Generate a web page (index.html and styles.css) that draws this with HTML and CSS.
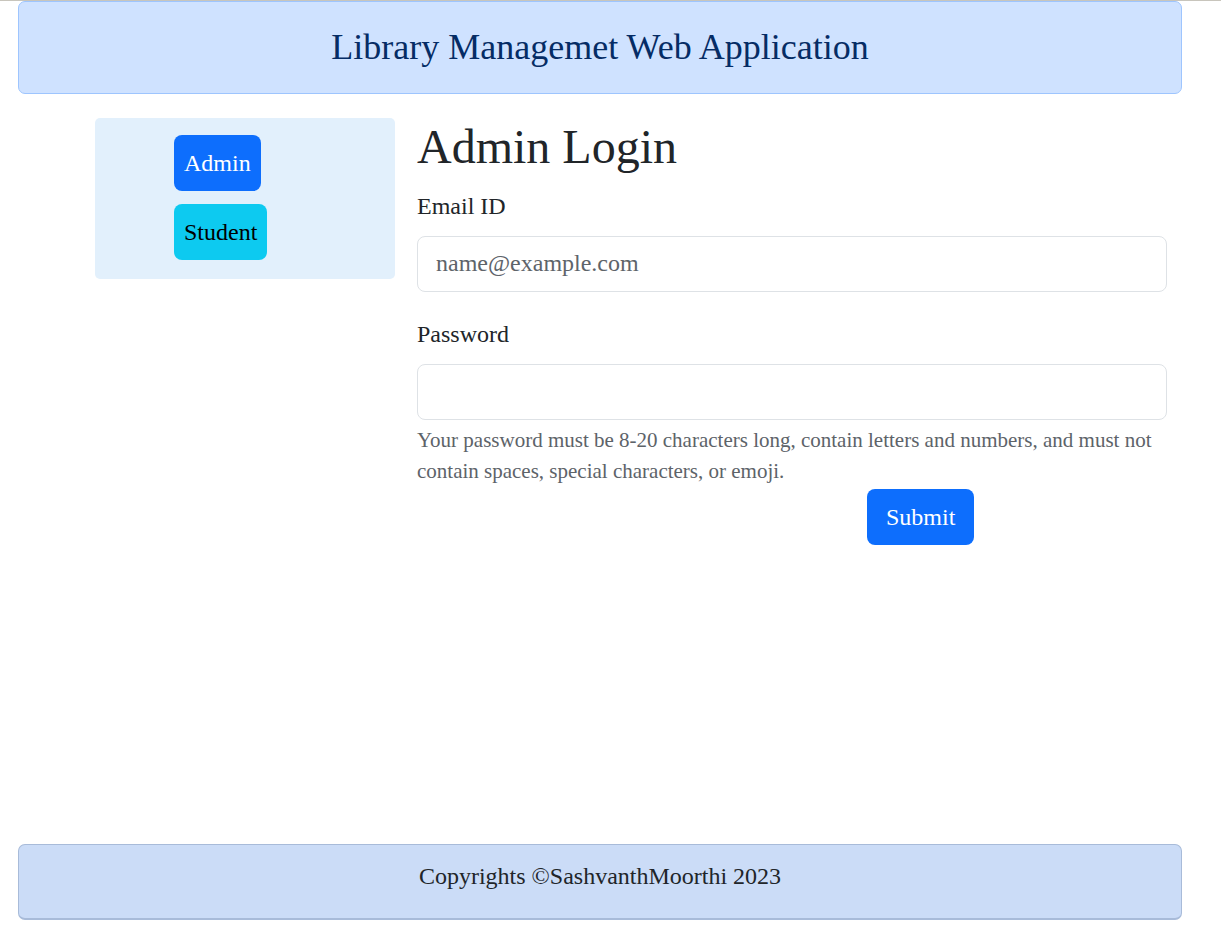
FILE: index.html
```html
<!DOCTYPE html>
<html lang="en">
<head>
<meta charset="utf-8">
<title>Library Management</title>
<link rel="stylesheet" href="styles.css">
</head>
<body>
<div class="page">
  <header class="site-header">
    <h2 class="site-title">Library Managemet Web Application</h2>
  </header>
  <div class="content">
    <aside class="sidebar">
      <button class="btn btn-primary">Admin</button>
      <button class="btn btn-info">Student</button>
    </aside>
    <main class="login">
      <h1 class="login-title">Admin Login</h1>
      <label class="form-label" for="email">Email ID</label>
      <input class="form-control" id="email" type="email" placeholder="name@example.com">
      <label class="form-label form-label-gap" for="pwd">Password</label>
      <input class="form-control" id="pwd" type="password">
      <p class="form-text">Your password must be 8-20 characters long, contain letters and numbers, and must not contain spaces, special characters, or emoji.</p>
      <div class="submit-row">
        <button class="btn btn-primary btn-submit" type="submit">Submit</button>
      </div>
    </main>
  </div>
  <footer class="site-footer">
    <p class="copyright">Copyrights ©SashvanthMoorthi 2023</p>
  </footer>
</div>
</body>
</html>
```
FILE: styles.css
```css
* { box-sizing: border-box; }
html, body { margin: 0; padding: 0; }
body {
  font-family: "Liberation Serif", "Times New Roman", serif;
  color: #212529;
  background: #fff;
  border-top: 1px solid #c8c5bc;
}
.page {
  display: flex;
  flex-direction: column;
  min-height: 941px;
  padding: 0 39px 22px 18px;
}
.site-header {
  height: 93px;
  background: #cfe2ff;
  border: 1px solid #9ec5fe;
  border-radius: 7px;
  display: flex;
  align-items: center;
  justify-content: center;
}
.site-title {
  margin: 0;
  font-weight: normal;
  font-size: 36px;
  line-height: 1.2;
  color: #052c65;
}
.content {
  display: flex;
  gap: 22px;
  padding-left: 77px;
  margin-top: 24px;
}
.sidebar {
  width: 300px;
  height: 161px;
  background: #e2f0fc;
  border-radius: 5px;
  padding: 17px 0 0 79px;
  display: flex;
  flex-direction: column;
  align-items: flex-start;
  gap: 13px;
}
.btn {
  font-family: inherit;
  font-size: 24px;
  line-height: 36px;
  padding: 10px 10px;
  border: 0;
  border-radius: 8px;
  cursor: pointer;
}
.btn-primary { background: #0d6efd; color: #fff; }
.btn-info { background: #0dcaf0; color: #000; }
.btn-submit { padding: 10px 19px; }
.login {
  width: 750px;
  display: flex;
  flex-direction: column;
  align-items: stretch;
}
.login-title {
  margin: 0 0 12px;
  font-weight: normal;
  font-size: 48px;
  line-height: 1.2;
}
.form-label {
  font-size: 24px;
  line-height: 1.5;
  margin-bottom: 12px;
}
.form-label-gap { margin-top: 24px; }
.form-control {
  height: 56px;
  width: 100%;
  font-family: inherit;
  font-size: 24px;
  padding: 10px 18px;
  border: 1px solid #dee2e6;
  border-radius: 8px;
  color: #212529;
  background: #fff;
}
.form-control::placeholder { color: #5e646a; }
.form-text {
  margin: 5px 0 0;
  font-size: 21px;
  line-height: 31px;
  color: #5d6369;
}
.submit-row {
  margin-top: 2px;
  padding-left: 450px;
}
.site-footer {
  margin-top: auto;
  height: 76px;
  background: #cbdcf7;
  border: 1px solid #a8bbd9;
  border-bottom-width: 2px;
  border-radius: 7px;
  display: flex;
  justify-content: center;
}
.copyright {
  margin: 13px 0 0;
  font-size: 24px;
  line-height: 1.5;
}
```
